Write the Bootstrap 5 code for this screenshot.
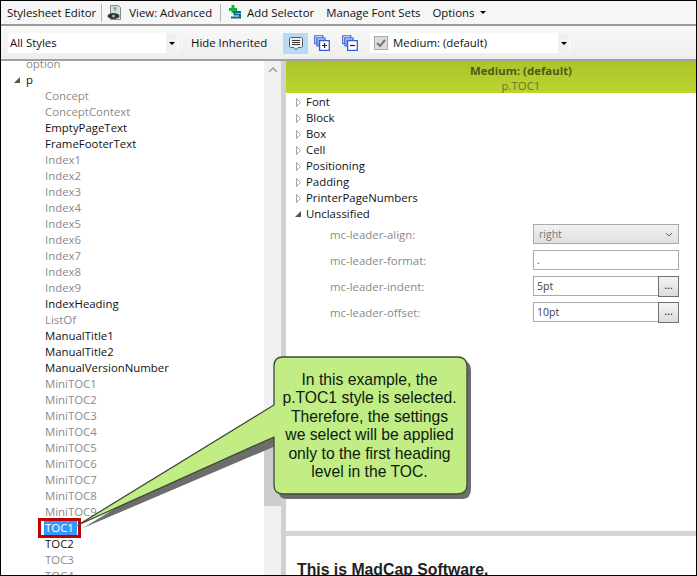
<!DOCTYPE html>
<html lang="en">
<head>
  <meta charset="UTF-8">
  <title>Stylesheet Editor</title>
  <meta name="viewport" content="width=device-width, initial-scale=1">
  <link href="https://cdn.jsdelivr.net/npm/bootstrap@5.3.3/dist/css/bootstrap.min.css" rel="stylesheet">
  <style>
    html, body { height: 100%; overflow: hidden; }
    body { font-family: "Open Sans", "Noto Sans", sans-serif; font-size: 11.4px; line-height: 16px; color: #111; background: #fff; }
    .app-frame { position: relative; width: 697px; height: 576px; border: 1px solid #000; overflow: hidden; }
    .menu-strip { height: 25px; background: #f6f6f6; border-bottom: 2px solid #9a9a9a; padding-left: 6px; }
    .tool-item { white-space: nowrap; }
    .tool-sep { width: 1px; height: 18px; background: #b5b5b5; }
    .ml-5 { margin-left: 5px; }
    .ml-6 { margin-left: 6px; }
    .ml-7 { margin-left: 7px; }
    .ml-8 { margin-left: 8px; }
    .ml-12 { margin-left: 12px; }
    .filter-strip { height: 35px; background: linear-gradient(#f8f8f8, #eeeeee); border-bottom: 2px solid #a0a0a0; padding-left: 7px; padding-top: 1px; }
    .combo-box { height: 20px; background: #fff; padding-left: 2px; padding-right: 1px; }
    .combo-left { width: 170px; }
    .combo-right { width: 200px; margin-left: 8px; padding-left: 4px; }
    .combo-arrow { width: 11px; height: 20px; background: #f0f0f0; }
    .down-tri { width: 0; height: 0; border: 3px solid transparent; border-top: 3px solid #000; border-bottom: 0; }
    .hide-label { width: 92px; margin-left: 13px; }
    .icon-btn { width: 24px; height: 21px; }
    .icon-on { width: 25px; background: #b9d9f5; }
    .icon-plus { margin-left: 2px; }
    .icon-minus { margin-left: 4px; }
    .work-area { height: 514px; }
    .tree-pane { width: 263px; padding-left: 25px; margin-top: -5px; overflow: hidden; }
    .tree-row { height: 16px; white-space: nowrap; }
    .tree-kids { padding-left: 19px; }
    .is-off { color: #8a8a8a; }
    .tree-sel { position: relative; display: inline-block; background: #3399ff; color: #fff; margin-left: -1px; padding: 0 3px 0 1px; height: 16px; }
    .tree-sel::after { content: ""; position: absolute; left: -6px; right: -4px; top: -2px; bottom: -2px; border: 3px solid #c00000; }
    .expander-open { position: absolute; width: 0; height: 0; border-style: solid; border-width: 0 0 6px 6px; border-color: transparent transparent #555 transparent; }
    .tree-open { left: 13px; top: 76px; }
    .prop-open { left: -11px; top: 5px; }
    .v-scroll { width: 17px; background: #f0f0f0; }
    .scroll-up { margin-top: 6px; }
    .v-thumb { position: absolute; left: 0; right: 0; top: 359px; height: 86px; background: #cdcdcd; }
    .pane-split { width: 5px; background: #d0d0d0; }
    .side-pane { width: 410px; overflow: hidden; }
    .medium-head { height: 32px; background: linear-gradient(#adc32b, #bdd52f); text-align: center; padding: 2px 0 0 60px; color: #4c5a1c; }
    .sub-name { color: #66752a; line-height: 15px; }
    .medium-head b { line-height: 15px; display: block; }
    .prop-list { height: 438px; padding: 1px 0 0 20px; }
    .prop-row { height: 16px; position: relative; }
    .prop-shut { position: absolute; left: -10px; top: 4px; }
    .prop-form { padding-left: 24px; }
    .form-line { height: 26px; padding-top: 2px; }
    .form-name { width: 203px; margin-top: 3px; color: #8a8a8a; }
    .fake-select, .fake-input { width: 146px; height: 20px; border: 1px solid #a9a9a9; font-size: 10.5px; padding: 0 3px; line-height: 18px; color: #444; }
    .fake-select { background: linear-gradient(#f2f2f2, #dfdfdf); color: #777; padding: 0 5px; }
    .fake-input.with-btn { width: 125px; border-right: 0; }
    .dots-btn { width: 21px; height: 21px; border: 1px solid #707070; background: linear-gradient(#f3f3f3, #dcdcdc); font-size: 11px; line-height: 16px; text-align: center; }
    .preview-split { height: 5px; background: #d4d4d4; }
    .preview-text { font-family: "Liberation Sans", Arial, sans-serif; font-size: 15.8px; font-weight: 700; line-height: 16px; color: #222; padding: 26px 0 0 11px; white-space: nowrap; }
    .note-shape { position: absolute; left: -1px; top: -1px; pointer-events: none; }
    .note-text { position: absolute; left: 272px; top: 370px; width: 193px; font-family: "Liberation Sans", Arial, sans-serif; font-size: 15.7px; line-height: 18.4px; text-align: center; color: #0b1b10; }
  </style>
</head>
<body>
<div class="app-frame">

  <div class="menu-strip d-flex align-items-center">
    <span class="tool-item">Stylesheet Editor</span>
    <span class="tool-sep ml-5"></span>
    <svg class="ml-5" width="15" height="18" viewBox="0 0 15 18">
      <path d="M3.500 1.500h8l2 2v12h-10z" fill="#d6e0e2" stroke="#7c8a8c"/>
      <path d="M6 4h4M8 4v3" stroke="#5a8a8a" fill="none"/>
      <ellipse cx="6.500" cy="12" rx="6" ry="3" fill="#333"/>
      <circle cx="6.500" cy="12" r="1.500" fill="#aaa"/>
    </svg>
    <span class="tool-item ml-7">View: Advanced</span>
    <span class="tool-sep ml-8"></span>
    <svg class="ml-8" width="12" height="15" viewBox="0 0 12 15">
      <path d="M0 3h8v3H0zM2.500 0h3v8h-3z" fill="#12b33c"/>
      <path d="M12 7H5.500v2.500h5.500v3H2" fill="none" stroke="#0d6a8f" stroke-width="2"/>
    </svg>
    <span class="tool-item ml-6">Add Selector</span>
    <span class="tool-item ml-12">Manage Font Sets</span>
    <span class="tool-item ml-12 d-flex align-items-center">Options <span class="down-tri ml-6"></span></span>
  </div>

  <div class="filter-strip d-flex align-items-center">
    <div class="combo-box combo-left d-flex justify-content-between align-items-center">
      <span>All Styles</span>
      <span class="combo-arrow d-flex align-items-center justify-content-center"><span class="down-tri"></span></span>
    </div>
    <span class="hide-label">Hide Inherited</span>
    <span class="icon-btn icon-on d-flex align-items-center justify-content-center">
      <svg width="16" height="16" viewBox="0 0 16 16"><path d="M2.500 2.500h11l1 1v8l-1 1h-3l-2.500 2-2.500-2h-3l-1-1v-8z" fill="#eef3f7" stroke="#5a5a5a"/><path d="M4 5.500h8M4 7.500h8M4 9.500h8" stroke="#333"/></svg>
    </span>
    <span class="icon-btn icon-plus d-flex align-items-center justify-content-center">
      <svg width="16" height="16" viewBox="0 0 16 16"><path d="M.75.750h8v2h-6v6h-2z M3 3h8v2H5v6H3z" fill="#fff" stroke="#3560d8" stroke-width="1.200"/><path d="M5.600 5.600h9.700v9.700H5.600z" fill="#fff" stroke="#3560d8" stroke-width="1.300"/><path d="M8 10.500h5M10.500 8v5" stroke="#222" stroke-width="1.200"/></svg>
    </span>
    <span class="icon-btn icon-minus d-flex align-items-center justify-content-center">
      <svg width="16" height="16" viewBox="0 0 16 16"><path d="M.75.750h8v2h-6v6h-2z M3 3h8v2H5v6H3z" fill="#fff" stroke="#3560d8" stroke-width="1.200"/><path d="M5.600 5.600h9.700v9.700H5.600z" fill="#fff" stroke="#3560d8" stroke-width="1.300"/><path d="M8 10.500h5" stroke="#222" stroke-width="1.200"/></svg>
    </span>
    <div class="combo-box combo-right d-flex align-items-center justify-content-between">
      <span class="d-flex align-items-center">
        <svg width="14" height="14" viewBox="0 0 14 14"><rect x=".5" y=".5" width="13" height="13" fill="#dcdcdc" stroke="#aaa"/><path d="M3 7l3 3 5-6" fill="none" stroke="#777" stroke-width="2"/></svg>
        <span class="ml-5">Medium: (default)</span>
      </span>
      <span class="combo-arrow d-flex align-items-center justify-content-center"><span class="down-tri"></span></span>
    </div>
  </div>

  <div class="work-area d-flex">
    <div class="tree-pane flex-shrink-0" id="tree"></div>
    <div class="v-scroll position-relative flex-shrink-0">
      <svg class="d-block mx-auto scroll-up" width="10" height="6" viewBox="0 0 10 6"><path d="M1 5l4-4 4 4" fill="none" stroke="#a0a0a0" stroke-width="1.500"/></svg>
      <div class="v-thumb"></div>
    </div>
    <div class="pane-split flex-shrink-0"></div>
    <div class="side-pane d-flex flex-column">
      <div class="medium-head flex-shrink-0">
        <b>Medium: (default)</b>
        <div class="sub-name">p.TOC1</div>
      </div>
      <div class="prop-list flex-shrink-0">
        <div class="prop-row"><svg class="prop-shut" width="5" height="9" viewBox="0 0 5 9"><path d="M.5.500l4 4-4 4z" fill="#fff" stroke="#a0a0a0"/></svg>Font</div>
        <div class="prop-row"><svg class="prop-shut" width="5" height="9" viewBox="0 0 5 9"><path d="M.5.500l4 4-4 4z" fill="#fff" stroke="#a0a0a0"/></svg>Block</div>
        <div class="prop-row"><svg class="prop-shut" width="5" height="9" viewBox="0 0 5 9"><path d="M.5.500l4 4-4 4z" fill="#fff" stroke="#a0a0a0"/></svg>Box</div>
        <div class="prop-row"><svg class="prop-shut" width="5" height="9" viewBox="0 0 5 9"><path d="M.5.500l4 4-4 4z" fill="#fff" stroke="#a0a0a0"/></svg>Cell</div>
        <div class="prop-row"><svg class="prop-shut" width="5" height="9" viewBox="0 0 5 9"><path d="M.5.500l4 4-4 4z" fill="#fff" stroke="#a0a0a0"/></svg>Positioning</div>
        <div class="prop-row"><svg class="prop-shut" width="5" height="9" viewBox="0 0 5 9"><path d="M.5.500l4 4-4 4z" fill="#fff" stroke="#a0a0a0"/></svg>Padding</div>
        <div class="prop-row"><svg class="prop-shut" width="5" height="9" viewBox="0 0 5 9"><path d="M.5.500l4 4-4 4z" fill="#fff" stroke="#a0a0a0"/></svg>PrinterPageNumbers</div>
        <div class="prop-row"><span class="expander-open prop-open"></span>Unclassified</div>
        <div class="prop-form">
          <div class="form-line d-flex align-items-start">
            <span class="form-name">mc-leader-align:</span>
            <div class="fake-select d-flex justify-content-between align-items-center">right
              <svg width="8" height="5" viewBox="0 0 8 5"><path d="M1 1l3 3 3-3" fill="none" stroke="#666"/></svg>
            </div>
          </div>
          <div class="form-line d-flex align-items-start">
            <span class="form-name">mc-leader-format:</span>
            <div class="fake-input">.</div>
          </div>
          <div class="form-line d-flex align-items-start">
            <span class="form-name">mc-leader-indent:</span>
            <div class="fake-input with-btn">5pt</div>
            <div class="dots-btn">...</div>
          </div>
          <div class="form-line d-flex align-items-start">
            <span class="form-name">mc-leader-offset:</span>
            <div class="fake-input with-btn">10pt</div>
            <div class="dots-btn">...</div>
          </div>
        </div>
      </div>
      <div class="preview-split flex-shrink-0"></div>
      <div class="preview-text">This is MadCap Software.</div>
    </div>
  </div>

  <span class="expander-open tree-open"></span>

  <!-- callout over the tree -->
  <svg class="note-shape" width="697" height="576" viewBox="0 0 697 576">
    <path d="M83 528L278 445V489Q278 499 287 499H462Q471 499 471 489V370Q471 361 462 361H287Q278 361 278 370V409Z" fill="#6d6d6d"/>
    <path d="M78 525L274 405V366Q274 357 283 357H457Q467 357 467 366V485Q467 494 457 494H283Q274 494 274 485V437Z" fill="#c2ec84" stroke="#3f4a3a" stroke-width="1.300" stroke-linejoin="round"/>
  </svg>
  <div class="note-text">In this example, the<br>p.TOC1 style is selected.<br>Therefore, the settings<br>we select will be applied<br>only to the first heading<br>level in the TOC.</div>
</div>

<script src="https://cdn.jsdelivr.net/npm/bootstrap@5.3.3/dist/js/bootstrap.bundle.min.js"></script>
<script>
  // tree rows: name and state (0 normal, 1 greyed out, 2 selected)
  const kids = [
    ["Concept",1],["ConceptContext",1],["EmptyPageText",0],["FrameFooterText",0],
    ["Index1",1],["Index2",1],["Index3",1],["Index4",1],["Index5",1],["Index6",1],["Index7",1],["Index8",1],["Index9",1],
    ["IndexHeading",0],["ListOf",1],["ManualTitle1",0],["ManualTitle2",0],["ManualVersionNumber",0],
    ["MiniTOC1",1],["MiniTOC2",1],["MiniTOC3",1],["MiniTOC4",1],["MiniTOC5",1],["MiniTOC6",1],["MiniTOC7",1],["MiniTOC8",1],["MiniTOC9",1],
    ["TOC1",2],["TOC2",0],["TOC3",1],["TOC4",1]
  ];
  let html = '<div class="tree-row is-off">option</div><div class="tree-row">p</div>';
  kids.forEach(k => {
    if (k[1] === 2) html += '<div class="tree-row tree-kids"><span class="tree-sel">' + k[0] + '</span></div>';
    else html += '<div class="tree-row tree-kids' + (k[1] ? ' is-off' : '') + '">' + k[0] + '</div>';
  });
  document.getElementById("tree").innerHTML = html;
</script>
</body>
</html>
